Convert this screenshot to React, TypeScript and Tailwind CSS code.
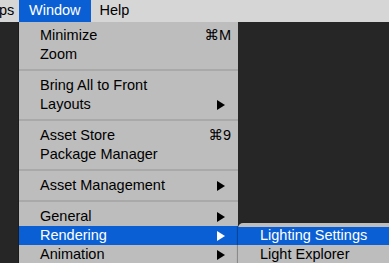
import React from 'react';

type Item =
  | { type: 'item'; label: string; shortcut?: string; submenu?: boolean; active?: boolean }
  | { type: 'sep' };

const items: Item[] = [
  { type: 'item', label: 'Minimize', shortcut: '⌘M' },
  { type: 'item', label: 'Zoom' },
  { type: 'sep' },
  { type: 'item', label: 'Bring All to Front' },
  { type: 'item', label: 'Layouts', submenu: true },
  { type: 'sep' },
  { type: 'item', label: 'Asset Store', shortcut: '⌘9' },
  { type: 'item', label: 'Package Manager' },
  { type: 'sep' },
  { type: 'item', label: 'Asset Management', submenu: true },
  { type: 'sep' },
  { type: 'item', label: 'General', submenu: true },
  { type: 'item', label: 'Rendering', submenu: true, active: true },
  { type: 'item', label: 'Animation', submenu: true },
];

const Arrow = ({ white }: { white?: boolean }) => (
  <svg width="8" height="10" viewBox="0 0 8 10">
    <polygon points="0,0 8,5 0,10" fill={white ? '#ffffff' : '#000000'} />
  </svg>
);

export default function App() {
  return (
    <div
      className="relative w-[389px] h-[263px] overflow-hidden bg-[#262626] text-[14.5px] text-black"
      style={{ fontFamily: '"Liberation Sans", "DejaVu Sans", sans-serif' }}
    >
      <div className="flex h-[22px] items-center bg-[#d6d6d6]">
        <span className="ml-[-1px] w-[20px]">ps</span>
        <span className="flex h-full items-center bg-[#0b5fd4] px-[10px] text-white">Window</span>
        <span className="ml-[9px]">Help</span>
      </div>

      <div className="absolute left-[19px] top-[22px] w-[219px] bg-[#bdbdbd] pt-[4px] shadow-[-1px_0_0_rgba(0,0,0,0.25)]">
        {items.map((it, i) =>
          it.type === 'sep' ? (
            <div key={i} className="flex h-[12px] items-center">
              <div className="h-[2px] w-full bg-[#a9a9a9]" />
            </div>
          ) : (
            <div
              key={i}
              className={`flex h-[19px] items-center justify-between pl-[21px] ${
                it.active ? 'bg-[#0b5fd4] text-white' : ''
              } ${it.submenu ? 'pr-[13px]' : 'pr-[7px]'}`}
            >
              <span>{it.label}</span>
              {it.shortcut && <span>{it.shortcut}</span>}
              {it.submenu && <Arrow white={it.active} />}
            </div>
          )
        )}
      </div>

      <div className="absolute left-[238px] top-[223px] w-[160px] rounded-tl-[5px] bg-[#bdbdbd] pt-[4px] shadow-[-1px_0_1px_rgba(0,0,0,0.3)]">
        <div className="flex h-[18px] items-center bg-[#0b5fd4] pl-[22px] text-white">Lighting Settings</div>
        <div className="flex h-[19px] items-center pl-[22px]">Light Explorer</div>
      </div>
    </div>
  );
}
